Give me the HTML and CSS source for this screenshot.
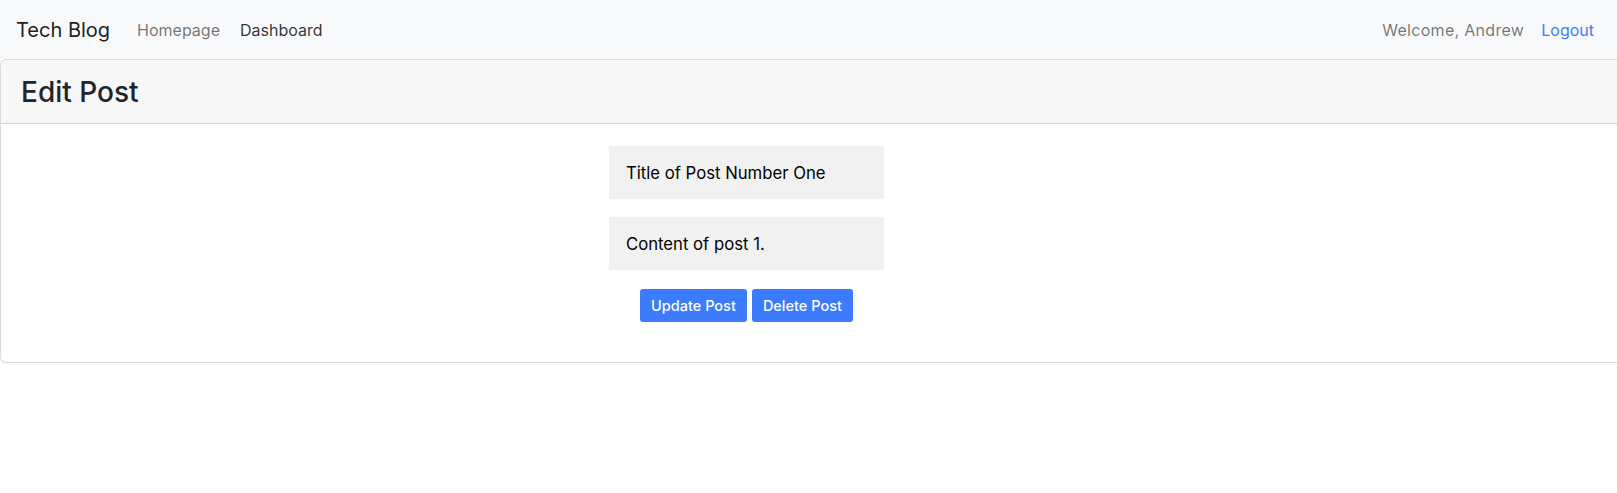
FILE: index.html
```html
<!DOCTYPE html>
<html lang="en">
<head>
<meta charset="utf-8">
<title>Tech Blog</title>
<link rel="stylesheet" href="styles.css">
</head>
<body>
<nav class="navbar">
  <div class="nav-left">
    <a class="brand" href="#">Tech Blog</a>
    <a class="nav-link" href="#">Homepage</a>
    <a class="nav-link active" href="#">Dashboard</a>
  </div>
  <div class="nav-right">
    <span class="welcome">Welcome, Andrew</span>
    <a class="logout" href="#">Logout</a>
  </div>
</nav>
<main class="card">
  <div class="card-header">
    <h3 class="title">Edit Post</h3>
  </div>
  <div class="card-body">
    <form class="edit-form">
      <input class="field" type="text" value="Title of Post Number One">
      <input class="field" type="text" value="Content of post 1.">
      <div class="actions">
        <button class="btn" type="button">Update Post</button>
        <button class="btn" type="button">Delete Post</button>
      </div>
    </form>
  </div>
</main>
</body>
</html>
```
FILE: styles.css
```css
* { box-sizing: border-box; }
html, body { overflow-x: hidden; }
body {
  margin: 0;
  font-family: Inter, "Noto Sans", "Liberation Sans", sans-serif;
  color: #212529;
  background: #fff;
}
a { text-decoration: none; }

.navbar {
  display: flex;
  justify-content: space-between;
  align-items: center;
  height: 59px;
  padding: 0 16px;
  background: #f8f9fa;
}
.nav-left, .nav-right {
  display: flex;
  align-items: center;
}
.brand {
  font-size: 20px;
  color: rgba(0,0,0,.9);
  margin-right: 27px;
}
.nav-link {
  font-size: 16px;
  color: rgba(0,0,0,.55);
  margin-right: 20px;
}
.nav-link.active { color: rgba(0,0,0,.8); }
.welcome {
  font-size: 16px;
  color: rgba(0,0,0,.55);
  margin-right: 17px;
  letter-spacing: 0.3px;
}
.logout {
  font-size: 16px;
  color: #3a7cfd;
  margin-right: 7px;
}

.card {
  width: calc(100% + 6px);
  border: 1px solid rgba(0,0,0,.14);
  border-radius: 6px;
  background: #fff;
}
.card-header {
  background: #f7f7f7;
  border-bottom: 1px solid rgba(0,0,0,.14);
  border-radius: 6px 6px 0 0;
  height: 64px;
  display: flex;
  align-items: center;
  padding: 0 20px;
}
.title {
  margin: 0;
  font-size: 28px;
  font-weight: 500;
  color: #212529;
}
.card-body {
  padding: 22px 130px 40px 0;
}
.edit-form {
  display: flex;
  flex-direction: column;
  align-items: center;
  gap: 18px;
}
.field {
  width: 275px;
  height: 53px;
  border: none;
  background: #f1f1f1;
  padding: 0 17px;
  font-family: inherit;
  font-size: 16.7px;
  color: #000;
  outline: none;
}
.actions {
  display: flex;
  gap: 5px;
  margin-top: 1px;
}
.btn {
  height: 33px;
  border: none;
  border-radius: 3px;
  background: #3b7bfc;
  color: #fff;
  font-family: inherit;
  font-size: 14.5px;
  font-weight: 500;
  padding: 0 11px;
}
```
